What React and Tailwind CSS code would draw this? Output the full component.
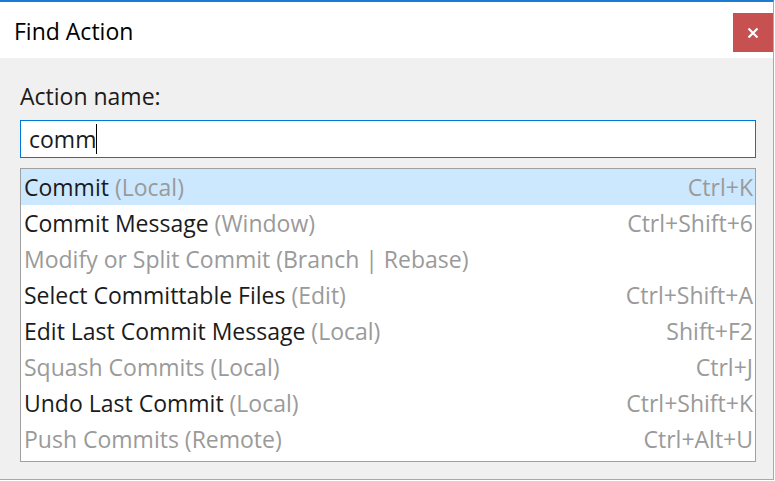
import React from 'react';

const actions = [
  { name: 'Commit', group: 'Local', shortcut: 'Ctrl+K', enabled: true, selected: true },
  { name: 'Commit Message', group: 'Window', shortcut: 'Ctrl+Shift+6', enabled: true },
  { name: 'Modify or Split Commit', group: 'Branch | Rebase', shortcut: '', enabled: false },
  { name: 'Select Committable Files', group: 'Edit', shortcut: 'Ctrl+Shift+A', enabled: true },
  { name: 'Edit Last Commit Message', group: 'Local', shortcut: 'Shift+F2', enabled: true },
  { name: 'Squash Commits', group: 'Local', shortcut: 'Ctrl+J', enabled: false },
  { name: 'Undo Last Commit', group: 'Local', shortcut: 'Ctrl+Shift+K', enabled: true },
  { name: 'Push Commits', group: 'Remote', shortcut: 'Ctrl+Alt+U', enabled: false },
];

const ActionRow = ({ action }) => (
  <div
    className={`flex h-[36px] items-center justify-between pl-[3px] pr-[2px] leading-[30px] ${
      action.selected ? 'bg-[#cce8ff]' : ''
    }`}
  >
    <span className="whitespace-nowrap">
      <span className={action.enabled ? 'text-[#1b1b1b]' : 'text-[#9a9a9a]'}>{action.name}</span>
      <span className="text-[#9a9a9a]"> ({action.group})</span>
    </span>
    <span className="whitespace-nowrap text-[#9a9a9a]">{action.shortcut}</span>
  </div>
);

export default function App() {
  return (
    <div
      className="h-[481px] w-[775px] bg-white"
      style={{ fontFamily: '"Open Sans", "Noto Sans", sans-serif' }}
    >
      <div className="flex h-[480px] w-[774px] flex-col border-t-2 border-r border-b border-t-[#1a7bd0] border-r-[#a9a9a9] border-b-[#a9a9a9]">
        {/* title bar */}
        <div className="flex h-[56px] items-start justify-between bg-white">
          <span className="ml-[14px] mt-[14px] text-[23px] leading-[30px] text-black">Find Action</span>
          <button className="mt-[11px] flex h-[39px] w-[40px] items-center justify-center bg-[#c75050]">
            <svg width="12" height="12" viewBox="0 0 12 12">
              <path d="M1.5 1.5 L10.5 10.5 M10.5 1.5 L1.5 10.5" stroke="white" strokeWidth="2.2" />
            </svg>
          </button>
        </div>

        {/* body */}
        <div className="flex flex-1 flex-col bg-[#f0f0f0] pl-[20px] pr-[17px] pt-[23px] text-[23px]">
          <label className="leading-[30px] text-[#1b1b1b]">Action name:</label>
          <div className="mt-[9px] flex h-[38px] items-center border border-[#0078d7] bg-white pl-[8px]">
            <span className="leading-[30px] text-[#1b1b1b]">comm</span>
            <span className="h-[30px] w-[1px] bg-black" />
          </div>
          <div className="mt-[10px] h-[294px] border border-[#a0a0a0] bg-white">
            {actions.map((action) => (
              <ActionRow key={action.name} action={action} />
            ))}
          </div>
        </div>
      </div>
    </div>
  );
}
